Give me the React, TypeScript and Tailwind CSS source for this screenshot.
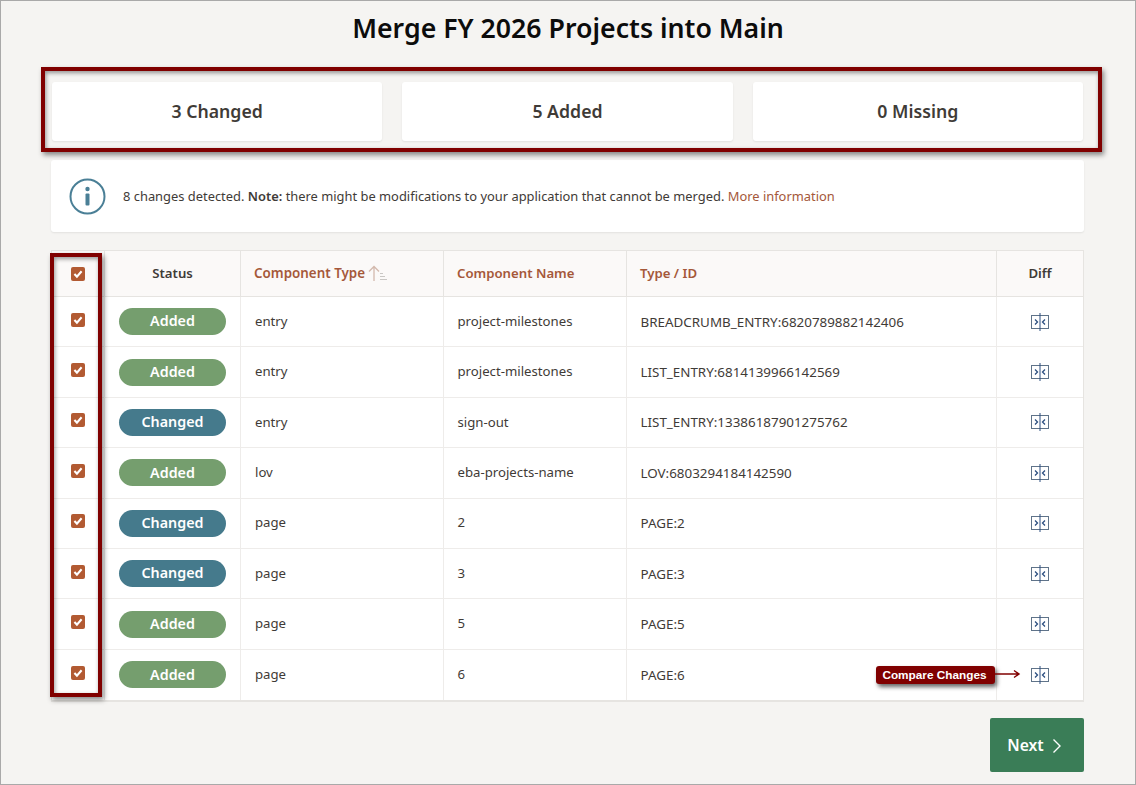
import React from "react";

const rows = [
  ["Added", "entry", "project-milestones", "BREADCRUMB_ENTRY:6820789882142406"],
  ["Added", "entry", "project-milestones", "LIST_ENTRY:6814139966142569"],
  ["Changed", "entry", "sign-out", "LIST_ENTRY:13386187901275762"],
  ["Added", "lov", "eba-projects-name", "LOV:6803294184142590"],
  ["Changed", "page", "2", "PAGE:2"],
  ["Changed", "page", "3", "PAGE:3"],
  ["Added", "page", "5", "PAGE:5"],
  ["Added", "page", "6", "PAGE:6"],
];

const cols = "grid grid-cols-[53px_136px_203px_183px_370px_1fr]";

function Check() {
  return (
    <span className="flex h-[14px] w-[14px] items-center justify-center rounded-[2px] bg-[#b25a32]">
      <svg width="10" height="10" viewBox="0 0 10 10" fill="none">
        <path d="M1.4 5.1 L3.9 7.6 L8.6 2.2" stroke="#fff" strokeWidth="2.1" />
      </svg>
    </span>
  );
}

function DiffIcon() {
  return (
    <svg width="20" height="18" viewBox="0 0 20 18" fill="none">
      <rect x="1.5" y="2.5" width="17" height="13" fill="#fff" stroke="#5f7389" />
      <path d="M10 0 V18" stroke="#2c4f80" strokeWidth="1" />
      <path d="M5 6.5 L7.5 9 L5 11.5" stroke="#2c4f80" strokeWidth="1.3" />
      <path d="M15 6.5 L12.5 9 L15 11.5" stroke="#2c4f80" strokeWidth="1.3" />
    </svg>
  );
}

function Stat({ label }: { label: string }) {
  return (
    <div className="flex h-[59px] flex-1 items-center justify-center rounded-[3px] bg-white text-[17.7px] font-semibold text-[#3f3b37] shadow-[0_1px_2px_rgba(0,0,0,0.08)]">
      {label}
    </div>
  );
}

export default function App() {
  return (
    <div
      className="relative h-[785px] w-[1136px] overflow-hidden border border-[#a9a9a9] bg-[#f5f4f2] text-[#3f3b37]"
      style={{ fontFamily: '"Noto Sans", "Open Sans", sans-serif' }}
    >
      <h1 className="pt-[7px] text-center text-[26.7px] leading-[40px] font-semibold text-[#0c0c0c]">
        Merge FY 2026 Projects into Main
      </h1>

      <div className="flex gap-5 pt-[34px] pr-[52px] pl-[51px]">
        <Stat label="3 Changed" />
        <Stat label="5 Added" />
        <Stat label="0 Missing" />
      </div>

      <div className="mt-[19px] mr-[51px] ml-[50px] flex h-[72px] items-center gap-[17px] rounded-[3px] bg-white pl-[18px] text-[12.9px] shadow-[0_1px_2px_rgba(0,0,0,0.08)]">
        <svg width="37" height="37" viewBox="0 0 37 37" fill="none">
          <circle cx="18.5" cy="18.5" r="17" stroke="#4a7f96" strokeWidth="2" />
          <circle cx="18.5" cy="11" r="2.2" fill="#4a7f96" />
          <rect x="16.5" y="15.5" width="4" height="12" rx="1" fill="#4a7f96" />
        </svg>
        <p className="pt-[1px]">
          8 changes detected. <b className="font-semibold">Note:</b> there might be modifications to
          your application that cannot be merged. <span className="text-[#a5583a]">More information</span>
        </p>
      </div>

      <div className="mt-[18px] mr-[51px] ml-[50px] border border-b-2 border-[#e6e4e1] bg-white text-[13.2px]">
        <div className={`${cols} h-[46px] border-b border-[#e6e4e1] bg-[#fbf9f8] font-semibold`}>
          <div className="flex items-center justify-center border-r border-[#e6e4e1]">
            <Check />
          </div>
          <div className="flex items-center justify-center border-r border-[#e6e4e1]">Status</div>
          <div className="flex items-center gap-[3px] border-r border-[#e6e4e1] pl-[13px] text-[13.4px] text-[#a5583a]">
            Component Type
            <svg width="20" height="17" viewBox="0 0 20 17" fill="none">
              <path d="M6 16 V1.5 M1 6.5 L6 1.5 L11 6.5" stroke="#d3b9ad" strokeWidth="1.3" />
              <path d="M12 8.5 H15 M12 11.5 H17 M12 14.5 H19" stroke="#c9c7c4" strokeWidth="1" />
            </svg>
          </div>
          <div className="flex items-center border-r border-[#e6e4e1] pl-[13px] text-[#a5583a]">Component Name</div>
          <div className="flex items-center border-r border-[#e6e4e1] pl-[13px] text-[#a5583a]">Type / ID</div>
          <div className="flex items-center justify-center">Diff</div>
        </div>

        {rows.map(([status, type, name, id], i) => (
          <div
            key={i}
            className={`${cols} h-[50.4px] border-b border-[#eeecea] last:border-b-0`}
          >
            <div className="flex items-center justify-center border-r border-[#eeecea] pb-[4px]">
              <Check />
            </div>
            <div className="flex items-center justify-center border-r border-[#eeecea]">
              <span
                className={`flex h-[27px] w-[107px] items-center justify-center rounded-full pb-[1px] text-[14.3px] font-semibold text-white ${
                  status === "Added" ? "bg-[#759e6e]" : "bg-[#457a8c]"
                }`}
              >
                {status}
              </span>
            </div>
            <div className="flex items-center border-r border-[#eeecea] pl-[14px]">{type}</div>
            <div className="flex items-center border-r border-[#eeecea] pl-[13.5px]">{name}</div>
            <div className="flex items-center border-r border-[#eeecea] pl-[13.5px] text-[13.4px]">{id}</div>
            <div className="flex items-center justify-center">
              <DiffIcon />
            </div>
          </div>
        ))}
      </div>

      <div className="mt-[16px] mr-[51px] flex justify-end">
        <button className="flex h-[54px] w-[94px] items-center justify-center gap-[8px] rounded-[2px] bg-[#3a7d57] pt-[1px] pr-[5px] text-[15.7px] font-semibold text-white">
          Next
          <svg width="10" height="16" viewBox="0 0 10 16" fill="none">
            <path d="M1.5 1.5 L8 8 L1.5 14.5" stroke="#fff" strokeWidth="1.4" />
          </svg>
        </button>
      </div>

      {/* annotations */}
      <div className="absolute top-[66px] left-[40px] h-[85px] w-[1061px] border-4 border-[#800000] shadow-[2px_3px_5px_rgba(0,0,0,0.45),inset_1px_2px_4px_rgba(0,0,0,0.4)]" />
      <div className="absolute top-[252px] left-[49px] h-[444px] w-[52px] border-4 border-[#800000] shadow-[2px_3px_5px_rgba(0,0,0,0.45),inset_1px_2px_4px_rgba(0,0,0,0.4)]" />
      <div
        className="absolute top-[665px] left-[875px] flex h-[18px] w-[119px] items-center justify-center rounded-[3px] bg-[#800000] pt-[1px] pr-[2px] text-[11.8px] font-bold text-white shadow-[2px_3px_4px_rgba(0,0,0,0.6)]"
        style={{ fontFamily: '"Liberation Sans", Arial, sans-serif' }}
      >
        Compare Changes
      </div>
      <svg className="absolute top-[667px] left-[994px]" width="26" height="12" viewBox="0 0 26 12" fill="none">
        <path d="M0 6 H24 M19 2.5 L24 6 L19 9.5" stroke="#800000" strokeWidth="1.4" />
      </svg>
    </div>
  );
}
